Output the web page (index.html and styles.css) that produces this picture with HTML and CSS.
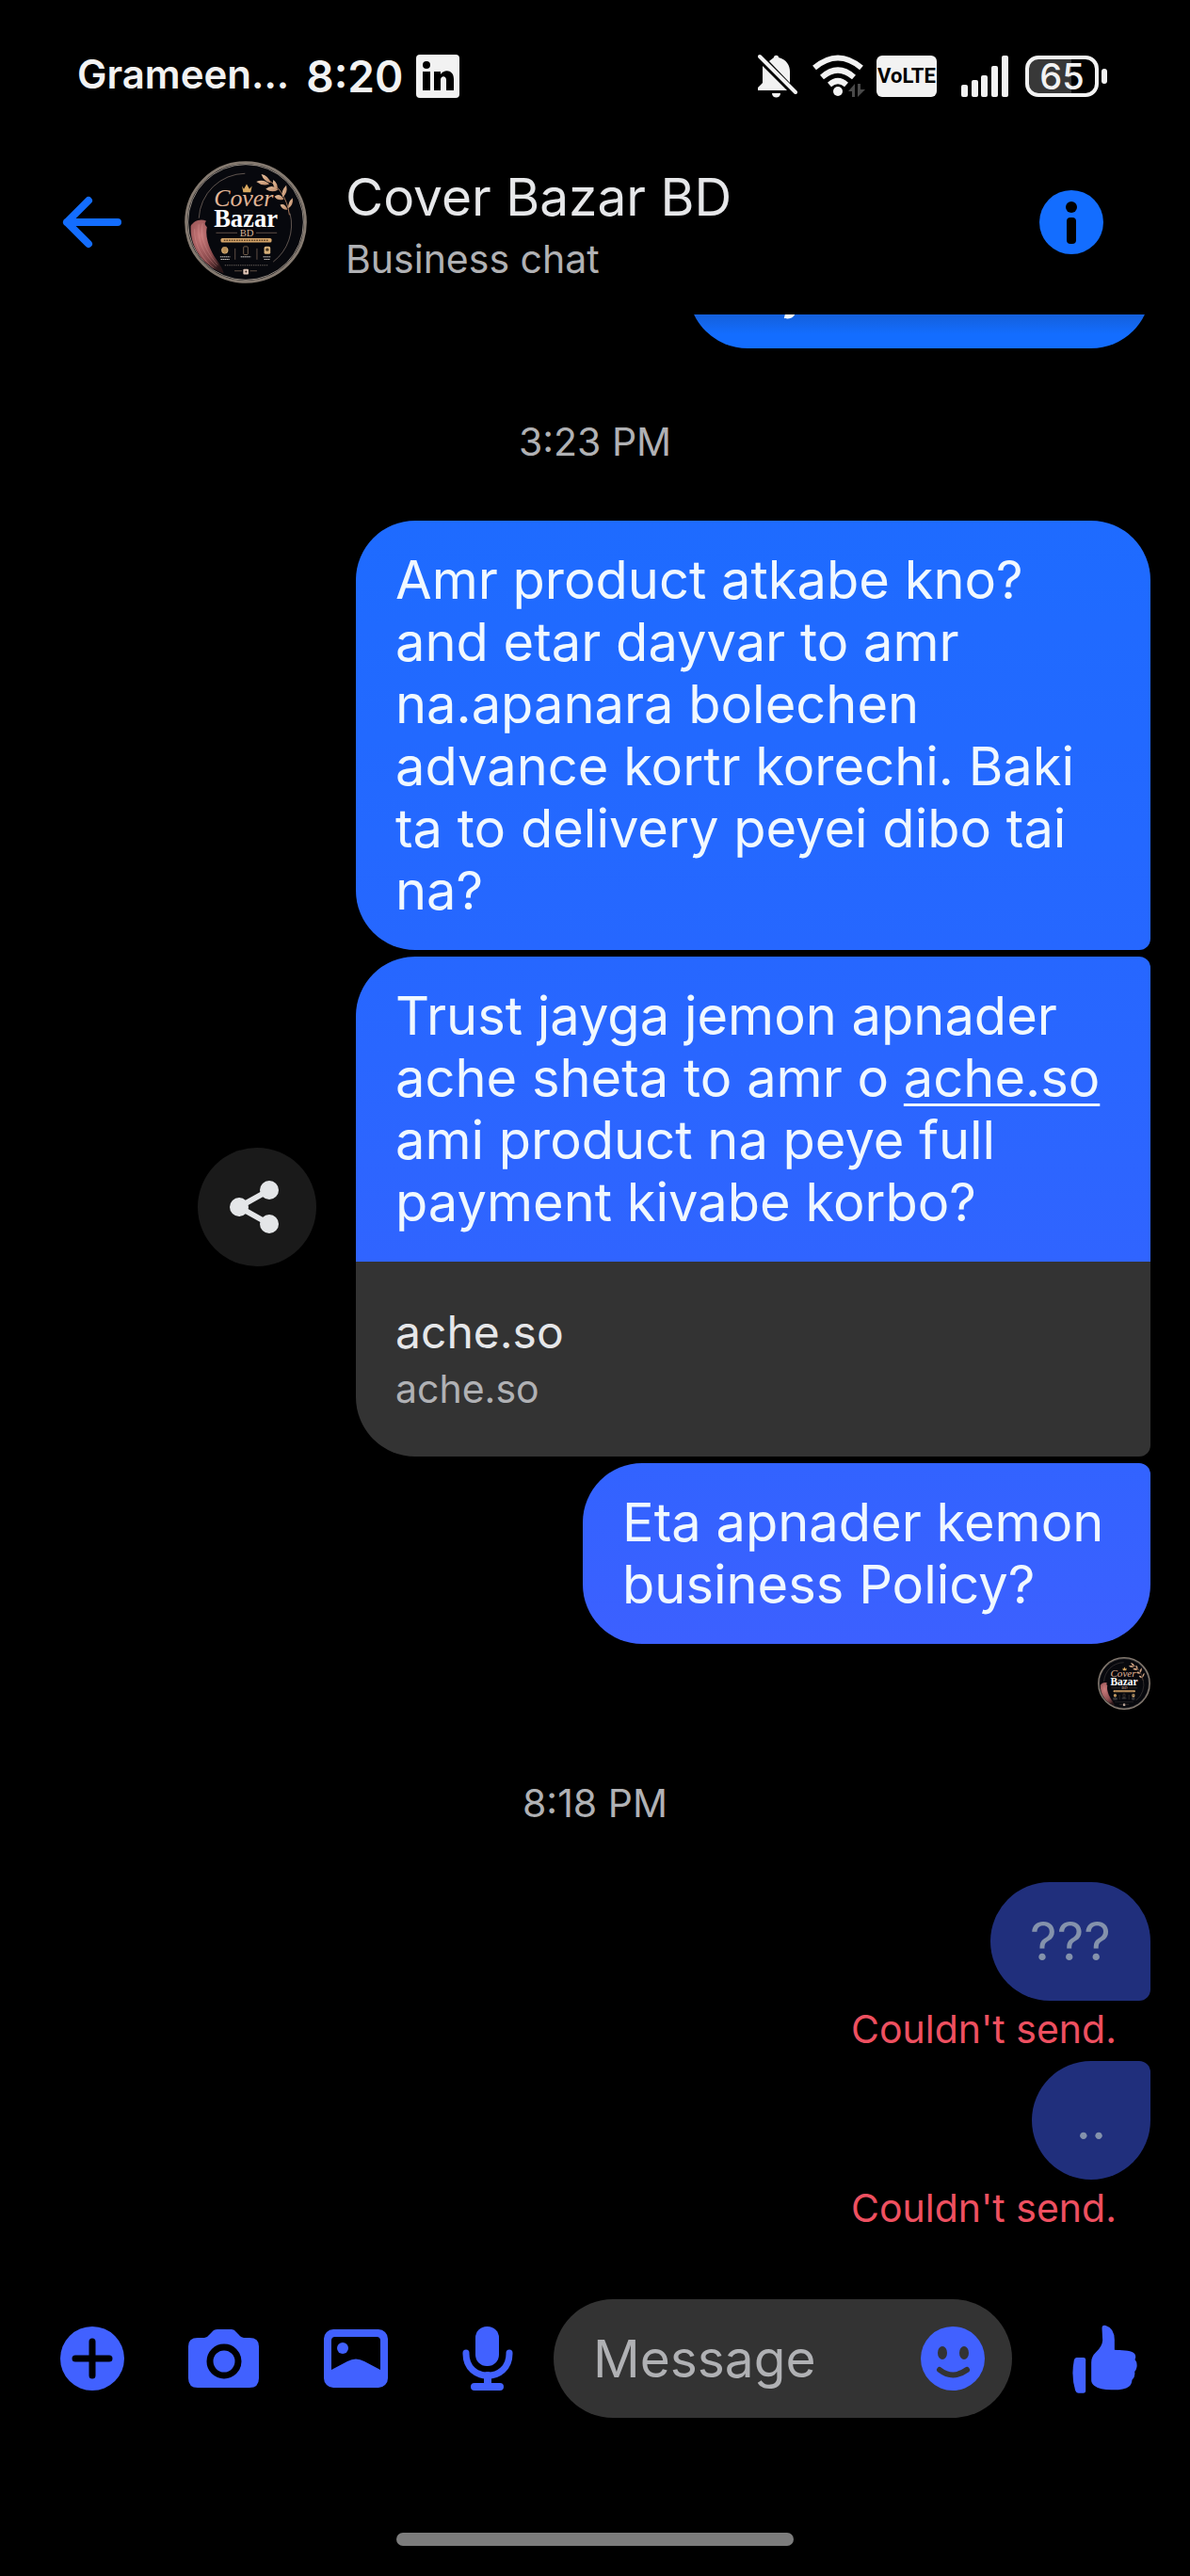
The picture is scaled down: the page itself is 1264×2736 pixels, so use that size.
FILE: index.html
```
<!DOCTYPE html>
<html lang="bn-Latn">
<head>
<meta charset="utf-8">
<meta name="viewport" content="width=device-width, initial-scale=1">
<title>Cover Bazar BD</title>
<link rel="stylesheet" href="styles.css">
</head>
<body>
<svg class="defs" aria-hidden="true">
  <defs>
    <radialGradient id="fur" cx="0.3" cy="0.3" r="0.8">
      <stop offset="0" stop-color="#c9797a"/>
      <stop offset="0.6" stop-color="#8a4a4c"/>
      <stop offset="1" stop-color="#2a1618"/>
    </radialGradient>
    <linearGradient id="rose" x1="0" y1="0" x2="1" y2="1">
      <stop offset="0" stop-color="#e9c3a0"/>
      <stop offset="1" stop-color="#b98463"/>
    </linearGradient>
    <symbol id="shop-logo" viewBox="46 32 392 392">
      <circle cx="242" cy="228" r="191" fill="#07080d" stroke="#857a70" stroke-width="9"/>
      <circle cx="242" cy="228" r="185" fill="none" stroke="#d8cabb" stroke-width="2"/>
      <path d="M240 72A150 150 0 0 0 92 215M384 200A150 150 0 0 1 330 355" fill="none" stroke="#8b7b70" stroke-width="2"/>
      <path d="M66 240C75 225 95 215 116 224C108 232 112 236 118 244C110 275 128 320 150 350C160 365 168 378 172 392C110 372 62 310 66 240Z" fill="url(#fur)"/>
      <g fill="none" stroke="#e0a09c" stroke-width="1">
        <path d="M78 250C76 300 105 350 140 375M92 235C84 290 112 335 148 370M104 232C94 280 118 325 152 365"/>
      </g>
      <path d="M300 86C345 105 375 150 382 205" fill="none" stroke="#a8795c" stroke-width="3"/>
      <g fill="url(#rose)">
        <path d="M276 98Q300 88 318 106Q296 114 276 98Z"/>
        <path d="M292 74Q314 78 322 102Q300 98 292 74Z"/>
        <path d="M306 122Q326 104 346 124Q326 136 306 122Z"/>
        <path d="M330 92Q348 104 342 126Q326 112 330 92Z"/>
        <path d="M334 146Q350 132 364 154Q346 162 334 146Z"/>
        <path d="M372 110Q378 136 360 148Q354 128 372 110Z"/>
        <path d="M352 172Q368 166 376 188Q360 190 352 172Z"/>
        <path d="M392 150Q396 172 378 184Q376 164 392 150Z"/>
      </g>
      <path d="M230 112L236 122L245 106L254 122L262 112L258 132H234Z" fill="#d9a860"/>
      <text x="140" y="178" class="logo-script">Cover</text>
      <text x="140" y="242" class="logo-name">Bazar</text>
      <text x="223" y="272" class="logo-suffix">BD</text>
      <path d="M147 262H215M275 262H342" stroke="#8d7462" stroke-width="2"/>
      <rect x="162" y="279" width="163" height="14" rx="5" fill="#d3a368"/>
      <path d="M172 286H314" stroke="#5b4026" stroke-width="4" stroke-dasharray="5 3"/>
      <circle cx="175" cy="318" r="11" fill="#d6b07a"/>
      <path d="M168 308H182V322L175 329L168 322Z" fill="#b78d55"/>
      <rect x="235" y="306" width="14" height="26" rx="3" fill="none" stroke="#a88a6a" stroke-width="2"/>
      <rect x="301" y="306" width="20" height="24" rx="5" fill="#d6b07a"/>
      <circle cx="311" cy="316" r="5" fill="#4d3922"/>
      <path d="M208 312V348M278 312V348" stroke="#8d7462" stroke-width="2"/>
      <path d="M160 339H192M226 339H258M298 339H322M162 347H190M301 347H320" stroke="#c9c5c2" stroke-width="3" stroke-dasharray="5 1"/>
      <path d="M175 366H312" stroke="#6d655f" stroke-width="3" stroke-dasharray="4 3"/>
      <path d="M206 384H230M256 384H278" stroke="#8d7462" stroke-width="2"/>
      <rect x="234" y="378" width="17" height="17" rx="3" fill="#dcc3b4"/>
      <circle cx="243" cy="386" r="3" fill="#3a2a25"/>
    </symbol>
  </defs>
</svg>

<div class="status">
  <span class="carrier">Grameen...</span>
  <span class="clock">8:20</span>
  <svg class="linkedin" width="46" height="46" viewBox="0 0 46 46" role="img" aria-label="LinkedIn">
    <rect width="46" height="46" rx="4" fill="#f2f2f2"/>
    <circle cx="11" cy="11" r="4" fill="#000"/>
    <path d="M7 18H15V38H7ZM19 18H26V21C30 15 40 16 40 26V38H32V27C32 22 26 22 26 27V38H19Z" fill="#000"/>
  </svg>
  <div class="indicators">
    <svg class="bell" width="42" height="48" viewBox="0 0 42 48" fill="#f2f2f2" role="img" aria-label="Muted">
      <path d="M12 8C14 6 16 5 17 4C17 1 22 1 22 4C30 6 34 12 34 19V31Z"/>
      <path d="M5 13L31 39H0V36L5 31Z"/>
      <path d="M15 42H24C24 48 15 48 15 42Z"/>
      <path d="M2 3L40 41" stroke="#f2f2f2" stroke-width="4" stroke-linecap="round"/>
    </svg>
    <svg class="wifi" width="58" height="46" viewBox="0 0 58 46" role="img" aria-label="Wi-Fi">
      <path d="M2 14Q27 -7 52 14M10 24Q27 9 44 24M18 32Q27 24 36 32" fill="none" stroke="#f2f2f2" stroke-width="6"/>
      <circle cx="27" cy="39" r="5" fill="#f2f2f2"/>
      <path d="M45 31V45H42V39H38ZM48 31V45L56 37H51V31Z" fill="#4a4a4a"/>
    </svg>
    <span class="volte">VoLTE</span>
    <svg class="signal" width="50" height="46" viewBox="0 0 50 46" fill="#f2f2f2" role="img" aria-label="Signal">
      <rect x="0" y="32" width="7" height="13" rx="2"/><rect x="11" y="27" width="7" height="18" rx="2"/><rect x="21" y="22" width="7" height="23" rx="2"/><rect x="32" y="12" width="7" height="33" rx="2"/><rect x="43" y="1" width="7" height="44" rx="2"/>
    </svg>
    <span class="battery"><span class="cell">65</span><span class="nub"></span></span>
  </div>
</div>

<header class="topbar">
  <button class="back" aria-label="Back">
    <svg width="64" height="56" viewBox="0 0 64 56" fill="none" stroke="#136dff" stroke-width="8" stroke-linecap="round" stroke-linejoin="round"><path d="M59 28H5M28 5L5 28L28 51"/></svg>
  </button>
  <svg class="avatar" width="130" height="130"><use href="#shop-logo"/></svg>
  <div class="who">
    <h1>Cover Bazar BD</h1>
    <p>Business chat</p>
  </div>
  <button class="info" aria-label="Info">
    <svg width="68" height="68" viewBox="0 0 68 68"><circle cx="34" cy="34" r="34" fill="#136dff"/><circle cx="34" cy="18" r="6" fill="#000"/><rect x="29" y="29" width="10" height="28" rx="4" fill="#000"/></svg>
  </button>
</header>

<main class="thread">
  <div class="bubble older">y</div>
  <time class="stamp">3:23 PM</time>
  <div class="group">
    <div class="bubble first">Amr product atkabe kno? and etar dayvar to amr na.apanara bolechen advance kortr korechi. Baki ta to delivery peyei dibo tai na?</div>
    <div class="row">
      <button class="share" aria-label="Share">
        <svg width="58" height="56" viewBox="0 0 58 56" fill="#e4e6e8"><path d="M42 10L10 28L42 46" fill="none" stroke="#e4e6e8" stroke-width="6"/><circle cx="10" cy="28" r="10"/><circle cx="42" cy="10" r="10"/><circle cx="42" cy="46" r="10"/></svg>
      </button>
      <div class="linked">
        <div class="bubble middle">Trust jayga jemon apnader ache sheta to amr o <a href="#ache">ache.so</a> ami product na peye full payment kivabe korbo?</div>
        <a class="preview" id="ache" href="#ache"><strong>ache.so</strong><span>ache.so</span></a>
      </div>
    </div>
    <div class="bubble last">Eta apnader kemon business Policy?</div>
  </div>
  <svg class="seen" width="56" height="56" role="img" aria-label="Seen"><use href="#shop-logo"/></svg>
  <time class="stamp">8:18 PM</time>
  <div class="bubble failed upper">???</div>
  <p class="error">Couldn't send.</p>
  <div class="bubble failed lower">..</div>
  <p class="error">Couldn't send.</p>
</main>

<form class="composer">
  <button type="button" aria-label="More">
    <svg width="68" height="68" viewBox="0 0 68 68"><circle cx="34" cy="34" r="34" fill="#4161ff"/><path d="M34 16V52M16 34H52" stroke="#000" stroke-width="7" stroke-linecap="round"/></svg>
  </button>
  <button type="button" aria-label="Camera">
    <svg width="76" height="62" viewBox="0 0 76 62"><path d="M0 18Q0 9 10 9H17Q20 9 22 6L25 3Q27 0 31 0H46Q49 0 51 3L54 6Q56 9 59 9H65Q75 9 75 18V52Q75 62 65 62H10Q0 62 0 52Z" fill="#4161ff"/><circle cx="38" cy="34" r="15" fill="#4161ff" stroke="#000" stroke-width="7"/></svg>
  </button>
  <button type="button" aria-label="Gallery">
    <svg width="68" height="62" viewBox="0 0 68 62"><rect width="68" height="62" rx="10" fill="#4161ff"/><path d="M12 8H56Q60 8 60 12V43L43 34Q34 29 25 34L8 43V12Q8 8 12 8Z" fill="#000"/><circle cx="20" cy="20" r="6" fill="#4161ff"/></svg>
  </button>
  <button type="button" aria-label="Voice message">
    <svg width="54" height="68" viewBox="0 0 54 68"><rect x="14" y="0" width="25" height="42" rx="12" fill="#4161ff"/><path d="M4 28V29C4 60 50 60 50 29V28" fill="none" stroke="#4161ff" stroke-width="7" stroke-linecap="round"/><path d="M27 52V64M13 64H40" stroke="#4161ff" stroke-width="8" stroke-linecap="round"/></svg>
  </button>
  <div class="field">
    <input type="text" placeholder="Message" aria-label="Message">
    <button type="button" class="emoji" aria-label="Emoji">
      <svg width="68" height="68" viewBox="0 0 68 68"><circle cx="34" cy="34" r="34" fill="#4161ff"/><ellipse cx="23" cy="28" rx="5" ry="7" fill="#333"/><ellipse cx="46" cy="28" rx="5" ry="7" fill="#333"/><path d="M20 46Q34 57 49 46" fill="none" stroke="#333" stroke-width="6" stroke-linecap="round"/></svg>
    </button>
  </div>
  <button type="button" class="like" aria-label="Like">
    <svg width="69" height="73" viewBox="57 50 206 219" fill="#4161ff"><path d="M70 155H92Q99 155 99 162V260Q99 268 92 268H76Q69 268 66 260Q52 215 62 163Q64 155 70 155Z"/><path d="M151 62Q151 50 163 53Q193 62 191 105V130C210 132 240 130 252 140Q262 148 256 161Q264 170 262 185Q260 196 255 200Q258 216 247 226Q246 240 236 248Q222 259 180 258Q145 258 127 245Q117 238 117 228V170Q117 152 132 138Q152 118 153 100Z"/></svg>
  </button>
</form>
<div class="home"></div>
</body>
</html>
```
FILE: styles.css
```
* { box-sizing: border-box; }

body {
  margin: 0;
  min-height: 100vh;
  display: flex;
  flex-direction: column;
  background: #000;
  color: #f0f8ff;
  font-family: Inter, "Noto Sans", sans-serif;
}

h1, p { margin: 0; font-weight: 400; }

button {
  display: grid;
  place-items: center;
  padding: 0;
  border: 0;
  background: none;
  cursor: pointer;
}

.defs { position: absolute; width: 0; height: 0; }

.logo-script { font: italic 78px "Liberation Serif", serif; fill: #e2b596; }
.logo-name { font: 700 80px "Liberation Serif", serif; fill: #fff; }
.logo-suffix { font: 32px "Liberation Serif", serif; fill: #d9b496; }

/* Status bar */
.status {
  display: flex;
  align-items: center;
  height: 138px;
  padding: 24px 88px 0 82px;
  color: #f2f2f2;
}
.carrier { font-size: 42px; font-weight: 600; padding-bottom: 6px; }
.clock { font-size: 46px; font-weight: 600; margin-left: 18px; }
.linkedin { margin-left: 14px; }
.indicators { display: flex; align-items: center; margin-left: auto; }
.wifi { margin-left: 16px; }
.volte {
  margin-left: 10px;
  width: 64px;
  border-radius: 6px;
  background: #f2f2f2;
  color: #000;
  font: 700 22px/44px Roboto, sans-serif;
  text-align: center;
}
.signal { margin-left: 26px; }
.battery { display: flex; align-items: center; gap: 3px; margin-left: 18px; }
.cell {
  width: 78px;
  border: 4px solid #f2f2f2;
  border-radius: 14px;
  background: linear-gradient(90deg, #383838 65%, #000 65%);
  font-size: 38px;
  font-weight: 500;
  line-height: 36px;
  text-align: center;
}
.nub { width: 6px; height: 16px; border-radius: 3px; background: #f2f2f2; }

/* Conversation header */
.topbar {
  display: flex;
  align-items: center;
  height: 196px;
  padding: 0 92px 0 66px;
}
.avatar { margin-left: 66px; }
.who { flex: 1; margin-left: 41px; padding-top: 6px; }
.who h1 { font-size: 55px; line-height: 72px; color: #e6e7e9; }
.who p { font-size: 41px; line-height: 60px; color: #b0b1b4; }

/* Messages */
.thread {
  flex: 1;
  display: flex;
  flex-direction: column;
  align-items: flex-end;
  padding: 0 42px;
  overflow: hidden;
}
.bubble {
  max-width: 844px;
  padding: 30px 42px;
  border-radius: 63px;
  font-size: 56px;
  line-height: 66px;
}
.bubble a { color: inherit; text-decoration-thickness: 3px; text-underline-offset: 7px; }
.older {
  width: 491px;
  margin-top: -90px;
  padding-left: 98px;
  background: linear-gradient(#1460dc 72%, #136dff 88%);
}
.stamp {
  align-self: center;
  margin: 75px 0 60px;
  font-size: 41px;
  line-height: 48px;
  color: #b0b1b4;
}
.group { display: flex; flex-direction: column; align-items: flex-end; gap: 7px; }
.first { border-bottom-right-radius: 12px; background: linear-gradient(#1e6bff, #2667ff); }
.row { display: flex; align-items: center; gap: 42px; }
.share { width: 126px; height: 126px; border-radius: 50%; background: #1a1a1a; }
.linked {
  max-width: 844px;
  border-radius: 63px 12px 12px 63px;
  overflow: hidden;
}
.middle { border-radius: 0; background: linear-gradient(#2667ff, #3064ff); }
.preview {
  display: flex;
  flex-direction: column;
  padding: 45px 42px 42px;
  background: #333;
  color: #b0b1b4;
  font-size: 41px;
  line-height: 60px;
  text-decoration: none;
}
.preview strong { color: #e6e7e9; font-size: 48px; font-weight: 400; }
.last {
  max-width: 603px;
  border-top-right-radius: 12px;
  background: linear-gradient(#3263ff, #3c60ff);
}
.seen { margin-top: 14px; }
.failed { min-width: 126px; background: #202f7c; color: #8492ac; text-align: center; }
.upper { border-bottom-right-radius: 12px; }
.lower { border-top-right-radius: 12px; }
.error {
  padding: 0 36px 4px 0;
  font-size: 41px;
  line-height: 60px;
  color: #ee5060;
}

/* Composer */
.composer {
  display: flex;
  align-items: center;
  padding: 63px 21px 122px 28px;
}
.composer > button { width: 140px; height: 126px; flex: none; }
.field {
  flex: 1;
  display: flex;
  align-items: center;
  min-width: 0;
  height: 126px;
  padding: 0 29px 0 42px;
  border-radius: 63px;
  background: #333;
}
.field input {
  flex: 1;
  min-width: 0;
  padding: 0;
  border: 0;
  outline: 0;
  background: none;
  color: #e6e7e9;
  font: 55px Inter, "Noto Sans", sans-serif;
}
.field input::placeholder { color: #b0b1b4; opacity: 1; }
.composer .like { margin-left: 28px; }
.home {
  align-self: center;
  width: 33.4%;
  height: 14px;
  margin-bottom: 32px;
  border-radius: 7px;
  background: #7c7c7c;
}
```
